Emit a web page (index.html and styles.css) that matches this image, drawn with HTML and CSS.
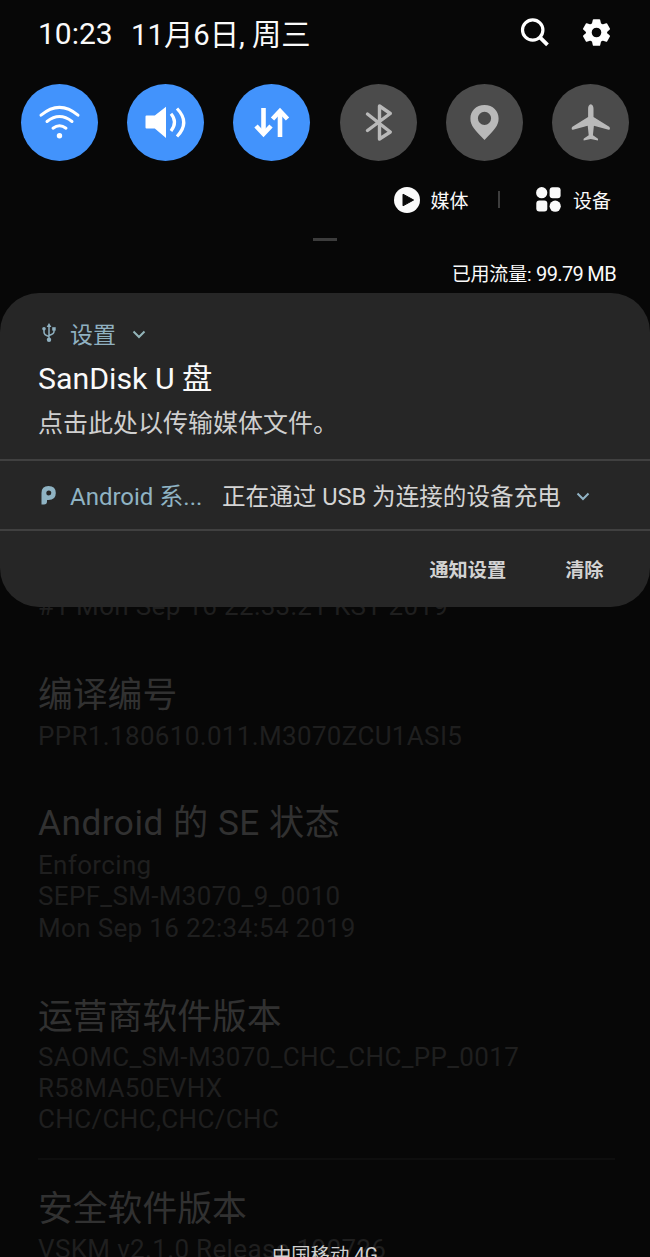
FILE: index.html
```html
<!DOCTYPE html>
<html lang="zh-CN">
<head>
<meta charset="utf-8">
<title>通知面板</title>
<link rel="stylesheet" href="styles.css">
</head>
<body>
<div class="screen">
  <main class="about">
    <section class="entry"><p class="v">#1 Mon Sep 16 22:33:21 KST 2019</p></section>
    <section class="entry"><h2>编译编号</h2><p class="v">PPR1.180610.011.M3070ZCU1ASI5</p></section>
    <section class="entry"><h2 class="t-se">Android 的 SE 状态</h2><p class="v">Enforcing</p><p class="v">SEPF_SM-M3070_9_0010</p><p class="v">Mon Sep 16 22:34:54 2019</p></section>
    <section class="entry ruled"><h2>运营商软件版本</h2><p class="v">SAOMC_SM-M3070_CHC_CHC_PP_0017</p><p class="v">R58MA50EVHX</p><p class="v">CHC/CHC,CHC/CHC</p></section>
    <section class="entry"><h2>安全软件版本</h2><p class="v">VSKM v2.1.0 Release 190726</p></section>
  </main>

  <div class="shade">
    <header class="status">
      <span class="clock">10:23</span><span class="date">11月6日, 周三</span>
      <svg class="search" viewBox="0 0 30 30" width="30" height="30"><circle cx="12.7" cy="13" r="10.2" fill="none" stroke="#fff" stroke-width="3.2"/><path d="M20 20.3l7.5 7.5" stroke="#fff" stroke-width="3.8"/></svg>
      <svg class="gear" viewBox="0 0 27 27" width="27" height="27"><path fill="#fff" stroke="#fff" stroke-width="1.6" stroke-linejoin="round" fill-rule="evenodd" d="M10.6 1h5.8l.9 3.9 2.3 1.3 3.8-1.2 2.8 5-2.9 2.6v1.8l2.9 2.6-2.8 5-3.8-1.2-2.3 1.3-.9 3.9h-5.8l-.9-3.9-2.3-1.3L3.6 22l-2.8-5 2.9-2.6v-1.8L.8 10l2.8-5 3.8 1.2 2.3-1.3zM13.5 7.9a5.600 5.600 0 1 0 0 11.200 5.600 5.600 0 0 0 0-11.200z"/></svg>
    </header>

    <nav class="toggles">
      <span class="toggle on"><svg viewBox="0 0 77 77"><g fill="none" stroke="#fff" stroke-width="3" stroke-linecap="round"><path d="M20 31.2Q38.5 15.5 57 31.2"/><path d="M26 37.5Q38.5 27.5 51 37.5"/><path d="M32 44.2Q38.5 39.3 45 44.2"/></g><circle cx="38.5" cy="51.7" r="2.7" fill="#fff"/></svg></span>
      <span class="toggle on"><svg viewBox="0 0 77 77"><path fill="#fff" d="M19.5 31.5h8.3L39 22.8V54L27.8 44.5h-8.3q-1 0-1-1v-11q0-1 1-1z"/><g fill="none" stroke="#fff" stroke-width="3.2"><path d="M44 29.8Q51 38 44 47"/><path d="M50 24.5Q63.5 38.5 50 52.5"/></g></svg></span>
      <span class="toggle on"><svg viewBox="0 0 77 77"><g fill="none" stroke="#fff" stroke-width="4.6"><path d="M30.5 24v26"/><path d="M23 42l7.5 8 7.5-8"/><path d="M47 53V27"/><path d="M39.5 35l7.5-8 7.5 8"/></g></svg></span>
      <span class="toggle"><svg viewBox="0 0 77 77"><path d="M27.5 30L50.3 48 39.5 55V22L50.3 29.5 27.5 46.5" fill="none" stroke="#b9b9b9" stroke-width="3.4" stroke-linejoin="round" stroke-linecap="round"/></svg></span>
      <span class="toggle"><svg viewBox="0 0 77 77"><path fill="#b9b9b9" fill-rule="evenodd" d="M38.5 21C30 21 24.4 27.2 24.4 34.5 24.4 42 29 46 38.5 56 48 46 52.6 42 52.6 34.5 52.6 27.2 47 21 38.5 21zM38.5 27.7a6.6 6.6 0 1 1 0 13.2 6.6 6.6 0 0 1 0-13.2z"/></svg></span>
      <span class="toggle"><svg viewBox="0 0 77 77"><path fill="#b9b9b9" d="M38.8 20.3c-1.8 0-2.7 2.2-2.7 4.4v8.2L20.4 42.8q-1 .7-.7 2.3.2 1 1.3.7l14.7-4.1 1 9.6-4.8 3.3q-.7.7-.2 1.8l7.1-1.4 7.1 1.4q.5-1.1-.2-1.8l-4.8-3.3 1-9.6 14.7 4.1q1.1.3 1.3-.7.3-1.6-.7-2.3L41.5 32.9v-8.2c0-2.2-.9-4.4-2.7-4.4z"/></svg></span>
    </nav>

    <div class="links">
      <svg class="play" width="26" height="26" viewBox="0 0 26 26"><circle cx="13" cy="13" r="13" fill="#fafafa"/><path d="M9 7.2v11.6L19.6 13z" fill="#080808" stroke="#080808" stroke-linejoin="round"/></svg>
      <span class="media">媒体</span><i class="bar"></i>
      <svg class="apps" width="25" height="25" viewBox="0 0 25 25" fill="#fafafa"><circle cx="5.7" cy="5.7" r="5.6"/><rect x="13.6" y=".3" width="11" height="11" rx="3"/><rect x=".3" y="13.6" width="11" height="11" rx="3"/><circle cx="19.2" cy="19.2" r="5.6"/></svg>
      <span>设备</span>
    </div>
    <div class="handle"></div>
    <p class="usage">已用流量: <b>99.79 MB</b></p>

    <article class="card">
      <section class="usb">
        <div class="app"><svg class="usbicon" width="14" height="20" viewBox="0 0 14 20" fill="none" stroke="#8fb0c0" stroke-width="1.5"><path d="M7 3v13M2 6v3.2Q2 12 7 13.5M12 6v2.5Q12 11 7 12.5"/><g fill="#8fb0c0" stroke="none"><path d="M7 0l2.4 4H4.6z"/><circle cx="2" cy="5.7" r="1.8"/><path d="M10.2 4.2h3.5v3.4h-3.5z"/><circle cx="7" cy="16.8" r="2.2"/></g></svg><span class="appname">设置</span><svg class="chev" width="14" height="9" viewBox="0 0 14 9"><path d="M1.5 1.5L7 7l5.5-5.5" fill="none" stroke="#93b5b9" stroke-width="2"/></svg></div>
        <h1>SanDisk U 盘</h1>
        <p class="body">点击此处以传输媒体文件。</p>
      </section>
      <section class="system">
        <svg class="pie" width="15" height="19" viewBox="0 0 15 19"><path fill="#8fb3c3" fill-rule="evenodd" d="M.5 18.5V7Q.5 0 7.5 0 14.8 0 14.8 7 14.8 14 7.5 14H6V15.5Q6 18.5 3 18.5zM7.8 4.5a2.5 2.5 0 1 0 0 5 2.5 2.5 0 0 0 0-5z"/></svg>
        <span class="sysname">Android 系...</span><span class="charging">正在通过 USB 为连接的设备充电</span>
        <svg class="chev2" width="14" height="9" viewBox="0 0 14 9"><path d="M1.5 1.5L7 7l5.5-5.5" fill="none" stroke="#91b3c5" stroke-width="2"/></svg>
      </section>
      <footer class="actions"><span>通知设置</span><span>清除</span></footer>
    </article>
    <div class="carrier">中国移动 4G</div>
  </div>
</div>
</body>
</html>
```
FILE: styles.css
```css
* { box-sizing: border-box; }
body, h1, h2, p { margin: 0; font-weight: 400; }
body { background: #070707; font-family: Roboto, "Noto Sans CJK SC", sans-serif; white-space: nowrap; }
svg { display: block; flex: none; }
.screen { display: grid; width: 650px; height: 1257px; overflow: hidden; }
.about, .shade { grid-area: 1 / 1; height: 1257px; overflow: hidden; min-width: 0; }

/* dimmed settings page */
.about { padding: 591px 35px 0 38px; }
.entry { margin-bottom: 50.8px; }
.entry h2 { height: 47.6px; font-size: 34.8px; line-height: 44px; color: #313131; }
.entry .t-se { font-size: 35.2px; letter-spacing: .5px; line-height: 41px; }
.v { height: 31.2px; font-size: 26px; line-height: 31px; color: #1f1f1f; letter-spacing: .34px; }
.ruled { padding-bottom: 22px; margin-bottom: 27px; border-bottom: 2px solid #0e0e0e; }

/* notification shade */
.shade { display: flex; flex-direction: column; position: relative; color: #fafafa; }
.status { display: flex; align-items: center; height: 68px; padding-left: 38px; font-size: 30px; }
.clock { width: 93px; margin-top: -2px; }
.date { width: 389px; margin-top: -5px; font-size: 29.3px; }
.search { margin-top: -4px; }
.gear { margin: -4px 0 0 33px; }
.toggles { display: flex; justify-content: space-between; height: 93px; padding: 16px 20.5px 0; }
.toggle { width: 77px; height: 77px; border-radius: 50%; background: #4b4b4b; }
.on { background: #4293fc; }
.links { display: flex; align-items: center; height: 77px; padding-left: 393.5px; font-size: 19px; }
.links span { margin-top: -1px; }
.links .media { margin-left: 11px; }
.bar { width: 2px; height: 17px; margin: 0 36px 0 29.5px; background: #3d3d3d; }
.apps { margin-right: 12px; }
.handle { width: 24px; height: 3px; margin: 0 0 0 313px; background: #3c3c3c; }
.usage { height: 52px; padding: 19px 34px 0 0; text-align: right; font-size: 19px; line-height: 28px; letter-spacing: -.15px; }
.usage b { font-size: 20px; font-weight: 400; letter-spacing: -.65px; }
.card { height: 314px; border-radius: 39px; background: #262626; }
.usb { height: 168px; padding: 23px 38px 0; border-bottom: 2px solid #404040; }
.app { display: flex; align-items: center; height: 34px; padding-left: 4px; color: #8fb0c0; font-size: 23px; }
.appname { width: 62px; margin: -1px 0 0 14px; }
.chev { margin-top: 2px; }
h1 { height: 55px; font-size: 30.3px; line-height: 57px; }
.body { font-size: 25px; line-height: 37px; color: #cfcfcf; }
.system { display: flex; align-items: center; height: 70px; padding-left: 41px; border-bottom: 2px solid #404040; font-size: 24px; }
.sysname { width: 152px; margin: -1px 0 0 14px; color: #8fb3c3; }
.charging { width: 354px; color: #d4d4d4; font-size: 23.6px; }
.chev2 { margin-top: 3px; }
.actions { display: flex; justify-content: flex-end; gap: 59px; height: 75px; padding-right: 46.5px; align-items: center; font-size: 19.2px; font-weight: 700; color: #d2d2d2; }
.carrier { position: absolute; top: 1244px; left: 0; width: 650px; text-align: center; font-size: 19.3px; line-height: 24px; color: #d0d0d0; }
```
